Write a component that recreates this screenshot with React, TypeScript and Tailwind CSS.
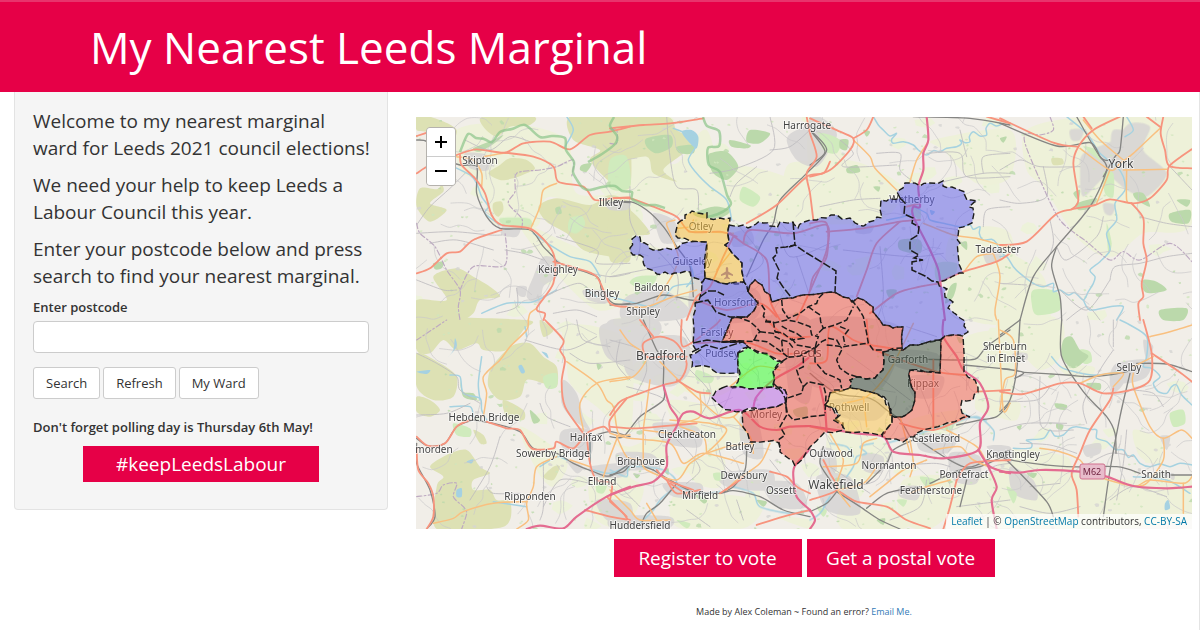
import React from "react";

type Layer =
  | "farm" | "moor" | "wood" | "urban" | "river" | "water" | "border" | "park"
  | "minor" | "rail" | "secondary" | "primary" | "motorway";

type Tile = { x: number; y: number } & Partial<Record<Layer, string[]>>;

/* Map geometry, split in tiles. One tile unit is a third of a map unit. */
const tiles: Tile[] = [
  {
    x: 410, y: 110,
    farm: ["140,60 300,40 470,90 500,250 660,250 660,330 420,260 380,350 250,340 210,220 150,180", "330,340 520,420 660,450 660,560 560,600 430,480"],
    moor: [
      "20,20 60,20 140,60 100,130 60,70 20,60", "220,20 370,20 360,45 300,50 260,80 220,50",
      "235,190 270,165 300,145 350,150 375,175 350,190 310,205 270,210",
      "30,235 80,238 95,225 100,245 60,280 110,300 60,335 20,290",
      "385,290 440,265 540,285 600,255 660,290 660,450 600,440 520,420 470,370 410,335",
      "480,20 640,20 660,60 660,230 600,215 540,150 570,120 490,90",
      "70,500 140,475 190,500 240,530 270,560 210,570 190,610 150,630 20,630 20,570 110,570",
      "250,280 275,275 280,300 265,320 250,305", "300,330 370,340 350,355 290,350",
    ],
    park: ["270,325 355,325 360,345 290,350", "480,325 515,318 525,345 500,370 475,360"],
    wood: ["70,460 100,455 95,475 75,478", "190,115 250,90 280,75 260,95 210,125", "436,295 450,290 455,310 440,312", "515,165 545,160 530,185 510,180"],
    urban: ["165,130 230,135 235,180 180,175", "280,345 330,350 320,380 275,375", "400,440 450,455 440,500 400,530 390,580 350,560 370,500", "520,540 600,545 590,580 535,570", "590,280 660,275 650,300 600,300", "320,530 350,530 345,560 325,555"],
    border: ["20,340 30,370 75,410 110,480 150,540 145,590 150,630", "150,540 190,470 285,465 285,365", "335,355 335,325 295,280 315,245 320,190 390,180 440,170 490,150 485,200"],
    river: ["130,170 180,195 200,220 215,260 235,290 225,310 270,345", "370,370 420,405 480,440 540,455 570,500", "470,20 490,60 465,110", "215,610 290,580 370,575 440,540", "530,540 560,560"],
    minor: ["20,345 60,290 120,235 165,190", "20,370 130,365 240,375 275,375", "60,400 140,390 250,420", "165,90 240,120 300,80 360,95", "20,510 100,540 140,540", "285,420 340,430 400,450", "400,560 470,530 510,520 540,540", "370,400 390,430 440,500", "440,380 560,420 560,460 660,460", "320,535 320,590 260,610", "430,610 500,600 560,620", "500,480 600,500 660,490"],
    rail: ["20,90 50,95 80,140 150,165 200,170 200,250 230,320 270,355 360,360 400,410 430,440 450,460 560,500 575,540 610,580 660,580", "610,275 660,278"],
    secondary: ["140,140 190,150 215,190 215,230", "220,140 280,130 300,130", "440,220 400,240 390,290 360,360", "380,595 360,610 355,630"],
    primary: ["20,78 60,65", "20,190 60,165 140,135 200,118 285,128 340,100 420,95 480,118 540,75 600,65 660,50", "285,128 370,140 430,170 445,215 520,230 555,270 610,265 660,262", "150,135 155,165 195,205 225,250 245,315 275,345 365,358 430,430 430,520 380,595 405,610 400,630", "20,490 60,475 110,430 150,425 190,390 275,360", "430,455 500,475 560,500 600,580 650,590"],
  },
  {
    x: 610, y: 110,
    farm: ["0,140 110,140 200,160 290,60 360,270 500,240 540,160 660,170 660,310 500,340 350,320 150,310 0,230", "100,400 250,480 260,600 100,500 0,500 0,450", "370,170 560,220 480,330 360,320"],
    moor: ["0,20 170,20 200,60 250,90 220,130 160,180 200,215 130,190 110,140 0,150", "0,290 60,300 120,370 60,380 60,440 0,450"],
    park: ["0,150 50,140 60,230 0,235", "80,500 140,500 110,540 60,520", "400,230 450,260 430,290 390,270"],
    wood: ["110,85 180,75 185,110 140,130 110,110", "200,110 250,105 250,130 210,130", "300,130 350,125 385,170 350,210 310,190 295,150", "420,60 480,70 450,100 410,95", "360,90 420,105 410,115 365,110", "250,310 310,290 360,300 340,320 280,325"],
    urban: ["560,60 640,40 660,110 620,170 560,150 530,90", "130,310 190,330 210,390 160,400 140,360", "50,560 160,540 240,600 200,630 40,630", "370,370 420,360 430,400 370,410", "260,500 440,540 430,630 250,630"],
    border: ["0,60 20,60 20,100 0,100"],
    river: ["190,55 250,80 260,105 235,150 260,190 300,230 350,270 365,330", "0,560 60,575 120,590 160,570 190,530 250,520", "240,460 250,500 230,530"],
    water: ["215,65 245,60 265,80 260,115 240,100"],
    minor: ["170,20 180,140 200,230 260,240 265,300", "300,190 380,175 490,120 480,20", "480,120 540,110 600,60", "360,260 380,220 440,170", "60,230 60,330 90,400 80,450", "0,500 100,480 200,460 300,450", "120,400 200,490 200,570", "380,340 460,450 400,500", "500,330 540,440 660,400", "560,440 600,560"],
    rail: ["0,278 60,275 110,300 160,350 200,410 240,470 250,560", "600,60 650,120 590,190 510,270 490,340 460,390 410,500", "0,585 80,580 160,555 240,570 300,575"],
    secondary: ["195,330 170,340 180,370 205,440 190,490 140,570", "200,355 240,350 250,330", "235,365 300,365 370,370", "30,590 110,590 190,560 260,540", "320,480 360,430"],
    primary: ["0,55 100,45 180,40 280,25", "0,265 60,265 130,290 200,320 240,365 330,365 380,380", "590,20 600,70 620,140 590,190 600,250 610,330", "660,155 640,190 590,200 500,285 410,340", "370,380 340,440 300,530 260,560 230,630", "360,370 400,400 470,450 480,570 510,630", "400,400 420,360 550,370 650,345 650,420 610,520 560,630", "260,570 350,600 450,580 500,620"],
  },
  {
    x: 810, y: 110,
    farm: ["0,170 110,150 200,180 280,240 210,330 0,330", "370,90 600,60 600,200 500,220 400,120", "420,380 600,370 600,630 430,600", "0,20 60,60 100,160 0,170"],
    wood: ["90,90 115,90 110,120 90,115", "160,60 180,65 170,80", "570,85 590,80 580,98", "110,175 140,165 150,185 115,190", "270,390 330,390 330,430 270,420", "230,540 260,540 250,565 235,560", "420,530 440,520 430,560 405,580", "450,400 470,395 470,420", "190,230 210,230 205,245"],
    park: ["30,70 90,90 80,130 40,120", "380,460 440,460 430,500 380,510", "300,300 330,290 330,330"],
    urban: ["0,20 60,40 80,80 30,140 0,160", "270,265 310,260 330,300 280,320", "520,415 570,415 570,450 530,460", "140,350 190,345 180,370 140,370"],
    river: ["190,20 205,45 220,60 240,78 260,70 245,88 250,100 280,95 310,105 325,120 350,135 370,122 390,125 410,115 440,110 455,100 450,90 465,98 480,95 478,80 490,65 510,78 530,75 528,55 540,40 560,48 580,40", "310,290 350,310 360,330 400,340 450,350 480,345 490,358 510,350 508,370 520,390 545,388 560,400 570,425 590,440", "230,330 280,320 310,310"],
    water: ["360,300 375,305 365,315"],
    minor: ["90,90 130,130 100,170 260,165", "200,130 270,130 270,180 310,215", "350,130 450,130 470,200 600,200", "400,215 520,190 600,190", "30,290 130,270 210,265", "450,60 470,140", "520,190 520,140 600,130", "210,410 220,560 200,630", "100,420 300,440 400,430", "380,350 450,360", "520,350 530,300 600,290"],
    rail: ["310,20 480,25 600,45", "0,60 45,125 0,165"],
    secondary: ["130,90 180,140 195,175 260,240", "355,95 320,150 300,215", "340,340 430,375 500,385 590,410 600,405", "460,488 500,440 550,430", "550,430 570,500 555,600 560,630"],
    primary: ["0,25 90,65 130,85 120,120 60,180 0,200", "190,20 170,60 130,85", "50,365 160,355 270,335 330,330", "270,335 200,400 170,480 140,560", "380,520 460,485 560,455 600,430", "530,20 600,40", "0,340 50,340 50,440 10,500 0,540", "290,290 330,280", "180,610 260,550 330,530 390,520"],
    motorway: ["350,20 355,90 340,130 340,180 325,230 330,290 310,290 310,320 360,420 385,480 395,550 405,630"],
  },
  {
    x: 1000, y: 110,
    farm: ["80,60 260,20 576,20 576,340 430,370 340,440 250,400 200,340 130,230 80,180", "0,430 130,500 130,630 0,630", "170,240 320,280 330,440 230,380"],
    wood: ["230,280 290,265 270,295 235,300", "430,510 470,515 500,540 450,550 430,540", "510,310 570,300 565,340 515,335", "400,250 430,250 450,290 410,270", "220,250 240,240 235,270", "530,270 570,270 560,290", "480,600 560,595 550,630 490,630"],
    park: ["100,540 170,545 180,600 110,615 95,580", "310,190 340,190 340,260 315,250", "320,340 335,400 325,430", "250,110 290,120 300,150"],
    moor: ["155,145 185,145 190,162 160,165", "480,605 540,595 540,630 490,625"],
    urban: ["250,130 340,90 390,40 450,50 430,120 500,190 440,260 380,240 320,200 250,260 240,180", "210,60 250,60 240,90 215,90", "310,280 345,285 335,315 315,310", "340,60 420,80 400,140 340,130"],
    border: ["150,20 160,60 120,75 80,70 75,100 120,210 180,330 260,395 330,450 370,425 420,450 510,400 576,455"],
    river: ["200,20 260,70 300,130 350,170 370,200 375,240 345,280 350,330 320,370 330,420 300,455 270,480 285,500 280,520 265,545 250,570 225,548 205,555 180,540 160,545 160,520 130,530 100,520 60,490 40,470 20,440 0,440", "380,20 400,60 375,80", "250,570 270,600 330,590 370,590 350,630"],
    minor: ["0,180 60,150 120,170 240,170", "130,170 140,260 60,280 0,270", "420,320 500,340 576,350", "330,510 345,470 420,460 500,440 576,430", "0,520 80,525", "170,410 200,450 290,380 310,320", "180,540 260,600 330,510", "510,170 576,240", "150,330 160,400 130,480", "200,630 260,590 300,630"],
    rail: ["0,40 170,108 270,98 300,140 320,180 270,290 170,410 100,500 60,630", "230,20 300,140 330,150", "370,20 360,120 345,140 310,200", "170,410 155,470 180,560 185,630"],
    secondary: ["250,30 300,90 370,150", "240,115 330,180 360,160 400,130 480,55", "330,180 290,280", "370,180 500,178", "380,180 380,270 395,280"],
    primary: ["0,25 160,98 235,110", "360,20 280,60 235,110 220,160 235,270 215,298", "0,405 80,395 165,315 215,298 285,285 330,268 400,280 450,265 500,210 508,168 575,118", "250,20 275,55", "490,20 482,70 495,120 508,168 575,175", "440,20 482,52", "395,280 430,325 430,400 440,450 425,520 430,560 415,580 420,630"],
  },
  {
    x: 410, y: 320,
    farm: ["460,20 560,20 660,80 660,330 560,260 480,190 470,100", "330,320 470,420 430,500 380,450", "540,480 660,470 660,620 560,600"],
    moor: ["20,0 350,0 340,30 290,90 220,90 200,70 140,90 100,60 60,100 20,90", "20,100 90,130 140,170 130,230 70,240 20,200", "270,110 310,75 360,70 400,110 440,140 440,200 400,190 350,180 330,230 270,240 235,200 240,150", "20,230 60,240 90,270 60,290 20,275", "60,440 110,405 170,390 210,440 240,460 190,480 190,510 240,510 260,540 300,545 300,600 260,625 80,627 80,500 100,470", "190,330 220,345 230,370 210,370", "390,0 430,30 400,50", "400,470 430,440 450,440 430,480", "280,240 340,270 340,300 290,290"],
    park: ["400,170 440,160 440,200 410,205", "130,310 180,325 180,350 140,345", "560,490 590,495 580,520 560,515"],
    wood: ["150,180 160,230 200,240 190,220 160,215", "360,270 390,300 370,310", "560,130 575,135 565,150"],
    urban: ["460,330 540,330 545,400 490,410 450,370", "460,180 500,220 520,290 540,330 490,300 455,250", "570,20 660,10 660,130 590,110", "540,440 660,430 640,470 560,470", "470,420 520,440 500,460", "560,540 660,550 660,620 590,600", "480,210 510,250 500,270"],
    border: ["20,60 110,0", "20,530 80,520 100,495 140,490 130,530 160,560 170,580 155,627"],
    river: ["120,165 150,170 160,220 210,235 215,270 230,300", "215,110 205,190 210,240", "250,545 350,560", "390,440 440,410 470,420", "540,370 540,430", "550,450 600,460 650,440", "120,260 180,260 190,290", "345,20 350,50"],
    water: ["325,140 335,135 345,155 335,160", "395,95 410,100 415,115", "140,510 155,505 155,530 140,530", "135,55 140,80 115,110 130,90", "20,155 60,150 50,162", "170,425 190,418 185,430"],
    minor: ["20,100 80,130 140,170 150,210 210,250", "270,350 240,440 180,540", "20,285 110,280 180,250", "345,60 470,90 560,50", "390,250 410,290 480,320", "400,560 450,480 540,490", "480,100 540,130 660,120", "500,0 520,60 600,80", "330,520 250,520 230,500", "400,430 400,560 390,600"],
    rail: ["20,355 55,378 105,370 140,320 190,300", "20,370 20,430 60,510 75,590 50,627", "190,300 250,310 330,335 370,385 440,400 490,430 550,455 600,468 660,430", "540,350 540,430", "560,345 600,335 660,350"],
    secondary: ["355,0 350,30 300,80 270,120 220,170 230,220 220,290", "440,410 380,440 370,500 350,550 355,600 320,627", "70,610 130,595 160,575 250,550 350,545", "470,125 560,190 590,240 610,260 625,340 660,345", "660,170 560,190 510,250 520,330", "480,420 540,440", "625,345 600,410 580,470"],
    primary: ["405,0 460,60 450,90 465,120 455,185 465,260 520,340", "230,305 290,325 330,330 365,385 430,385 440,365 490,385 530,340 580,320 600,335 600,300 650,235", "20,350 55,378 105,370 140,320 180,300", "20,385 25,450 55,490 70,530 70,590 50,627", "530,345 540,430 560,480 605,490 600,540", "525,570 600,590 660,600", "590,530 650,590"],
    motorway: ["350,627 390,617 460,625 500,590 590,530 660,500"],
  },
  {
    x: 610, y: 320,
    farm: ["210,140 340,150 370,200 310,230 220,210", "0,360 60,380 150,350 170,430 60,400", "180,240 380,280 410,370 330,380 200,310", "230,420 340,410 330,500 260,490", "0,470 100,500 60,600 0,590", "200,520 400,530 460,560 400,625 200,620", "500,590 600,600 600,627"],
    wood: ["160,450 175,445 175,465", "250,520 290,540 280,550", "70,460 90,465 80,475", "440,540 470,545 460,560", "320,230 350,240", "550,270 590,260 590,290 560,290"],
    park: ["310,460 340,460 335,480 315,480", "260,150 310,170 300,190 260,180", "200,600 240,610 230,625"],
    urban: ["50,60 220,50 240,150 180,200 60,170 40,110", "0,0 140,0 140,50 0,60", "390,290 440,290 460,410 400,400", "330,460 480,450 480,510 350,500", "130,310 260,320 270,380 170,370", "20,400 120,400 150,440 40,450", "160,490 270,490 270,530 190,530", "460,490 560,490 590,560 500,560", "10,590 180,590 170,627 10,627", "430,0 600,0 600,240 540,220 520,120 450,90", "260,0 360,0 340,60 250,60"],
    river: ["0,450 50,470 60,440 160,450 200,490 150,540 130,570 90,610", "370,500 430,520 450,560 540,580 600,570", "200,500 280,520 330,515"],
    minor: ["0,60 90,90 110,150 80,220", "200,0 250,80 300,130", "240,150 300,220 270,290", "180,340 240,400 270,450 230,490", "320,360 340,430 370,460", "280,170 380,170", "480,420 520,470 550,500", "50,200 150,230 210,280", "20,490 90,560", "230,570 300,620", "380,540 400,600", "30,60 20,130 60,180"],
    rail: ["100,0 140,90 160,120 160,190 160,240 90,290 40,350 0,350", "130,450 180,480 250,515 330,520 370,512 450,530 520,570 600,590", "410,390 405,450 370,500 330,520", "0,465 40,455 70,430 130,450", "200,490 150,550 110,580 95,610"],
    secondary: ["0,185 70,170 110,110 60,70 30,30", "120,180 110,260 100,330 100,430", "150,125 210,185 270,240 330,290 370,290 390,270", "0,340 60,355 180,370 220,430 280,400 400,430", "270,220 270,290 210,310", "180,300 300,310 350,330 300,390 240,430 200,480 110,450 90,420 50,410 20,350", "430,370 350,380 290,400", "480,370 450,430 380,480 350,510", "100,330 180,340", "210,320 280,350 290,400", "360,200 440,140 510,150", "0,510 60,570 90,600 180,600", "370,290 420,350 430,400", "140,600 110,550"],
    primary: ["0,285 30,245 90,220 160,195 210,180 230,130 200,70 150,50 100,70 110,110 160,110 230,110", "0,320 80,325 200,315 260,310", "200,180 260,215 300,220", "90,0 130,50", "215,0 220,80 310,20 330,0", "170,480 200,520 270,510", "140,450 170,480 250,510", "330,520 390,480 400,470", "480,455 530,470 560,500 600,520", "260,70 400,65 500,100 560,100", "600,50 530,50 470,0", "0,545 40,580 60,610", "180,490 240,530", "440,615 520,590 600,570"],
    motorway: ["0,525 70,500 130,485 170,440 170,375 205,305 180,260 160,195", "205,305 220,280 250,275 300,295 390,270 450,320 500,330 540,320 600,318", "600,388 555,437 550,470 560,530 600,570", "430,265 440,230 490,180 560,140 600,110"],
  },
  {
    x: 810, y: 320,
    farm: ["470,50 600,50 600,280 500,270 500,200 470,150", "60,340 200,350 240,400 200,460 120,500 60,440", "280,480 420,470 450,540 360,627 270,600", "440,500 600,460 600,627 430,627", "100,560 280,590 280,627 100,627", "300,300 460,270 440,330 340,350"],
    wood: ["200,600 225,595 220,615", "440,50 460,60 450,70", "290,370 300,380", "590,260 600,270", "210,350 230,360"],
    park: ["260,540 290,540 280,560", "20,560 50,570 40,590", "360,320 430,310 420,330", "330,470 380,480 350,500"],
    urban: ["240,90 380,100 370,160 260,140", "330,340 440,350 410,400 330,390", "20,470 120,470 150,580 50,570", "160,400 220,410 210,460 160,450", "420,400 510,410 500,490 430,480", "0,0 270,20 220,200 110,200 0,190", "300,170 400,170 380,230 310,230", "530,380 600,380 600,430", "270,500 330,500 320,540 270,530", "60,240 230,240 200,300 90,290", "30,390 70,390 80,450 40,470"],
    river: ["190,370 150,380 170,400 140,410 130,440 110,470", "230,370 300,350 360,330 430,310 500,290 550,330 550,360", "0,600 30,580 60,530 40,560", "460,280 480,290 530,300", "60,370 110,380 130,410"],
    minor: ["240,400 200,480 120,500", "420,340 400,400 460,440", "110,100 220,180 300,240", "60,440 120,480 180,520", "230,440 370,430 420,440", "350,480 330,560 240,600", "470,110 470,210", "440,560 600,540", "0,150 70,200 40,240", "500,480 550,440 600,430", "290,20 380,50", "330,200 370,300"],
    rail: ["350,118 460,120 500,115 530,80 600,30", "460,135 600,148", "0,160 80,220 180,235 230,270 270,300 300,350", "80,515 150,560 210,600 270,627", "170,565 230,520 330,500", "310,360 250,390 230,430 170,490", "80,515 60,480 30,430 40,380", "0,575 50,550 80,515", "310,350 460,440 550,410 600,390", "440,315 510,300 560,290 600,250", "470,480 450,560", "360,490 450,450 510,440 600,400"],
    secondary: ["60,340 100,420 80,500 120,560", "200,440 160,490 80,510", "350,420 280,450 230,490 180,530", "420,480 350,500 300,520", "300,360 310,430 300,470", "410,330 500,380 530,430", "160,230 170,320", "310,10 240,150 170,230 100,250", "370,390 450,380 490,420 590,460", "40,440 140,430 160,370 200,355", "600,250 580,270 570,100 565,0", "270,290 300,400"],
    primary: ["0,130 50,120 60,20 130,60 180,75 280,90", "0,320 50,330", "90,515 140,545 230,560 290,600 360,625", "170,0 180,75 220,100 380,155 470,165", "600,210 500,215", "370,120 370,330", "440,480 420,560 400,627", "40,420 60,460 80,510 0,540", "600,420 480,430 440,480", "270,310 370,330 470,290"],
    motorway: ["400,0 400,50 440,110 460,150 510,190 535,260 510,310 505,390 400,415 330,405 250,395 220,350 140,340 0,318", "505,390 540,440 600,460", "530,430 560,500 545,540 560,627", "0,570 15,600 0,627", "50,335 45,270 30,200"],
  },
  {
    x: 1000, y: 320,
    farm: ["0,0 180,0 180,110 120,150 60,100 0,90", "0,410 80,390 200,410 230,450 390,480 576,470 576,600 0,627", "180,140 280,140 270,170 210,170", "0,240 60,250 50,300 0,290", "400,330 480,360 480,430 420,410"],
    wood: ["190,60 215,50 240,90 265,110 220,145 185,110", "165,250 200,255 195,270 170,265", "170,310 190,315 185,330 170,325", "260,190 300,190 300,210 270,205", "80,460 110,460 100,475", "50,320 65,315 60,330"],
    park: ["240,90 270,95 275,125 250,130", "20,500 50,520 40,550", "510,280 550,270 555,310 520,320"],
    urban: ["350,130 450,120 440,170 380,190 330,180", "250,380 300,370 300,400 260,410", "40,100 80,100 80,120 40,120", "30,440 100,480 110,540 40,520", "480,460 520,460 520,480", "430,60 460,80 440,120", "330,180 370,190 340,220", "480,350 510,350 500,390"],
    river: ["360,0 390,15 440,50 440,110 430,140 455,145 480,170 460,190 475,215 500,220 515,200 530,195 545,225 576,255", "155,110 190,145 280,165 360,155", "40,385 90,385 95,370 80,360 130,355 150,330 165,348 190,345 210,325 230,320 270,328 290,330 290,355 320,365 345,388 370,390 385,412 400,405 420,430 450,440 480,432 510,440 540,430 576,435", "400,470 500,480 570,520"],
    water: ["495,550 505,540 510,565 495,570"],
    minor: ["60,370 150,375 230,400", "120,170 125,320 220,330", "260,310 250,250 300,150 340,90", "0,330 80,310 200,310", "0,245 110,240 150,200", "340,80 340,0", "60,560 150,580 240,560", "330,540 400,500 500,530", "380,330 370,430 350,540", "400,210 460,220 490,260", "250,440 330,400 400,410", "90,500 180,490"],
    rail: ["185,0 185,110 250,215 320,290 345,340 348,400", "60,0 50,150 30,240 0,275", "70,157 200,165 260,170 340,163 400,150", "410,130 500,132 576,155", "60,0 0,45", "0,145 70,157 45,175", "390,160 360,290 330,450 310,590", "0,410 60,425 200,440 350,440 420,460", "0,400 60,460 140,545 160,590", "510,465 576,465"],
    secondary: ["0,270 15,180 45,160 40,60 0,30", "240,190 300,165 370,160 340,200", "400,160 400,200 450,320 490,355 545,330 576,355", "450,50 510,35 576,15", "490,355 490,420 440,490 410,498", "120,385 180,395 240,420 270,460 360,490 410,498 450,480 550,490 576,470", "550,490 550,580", "400,140 440,120 460,110"],
    primary: ["0,215 70,222 180,190 240,190 310,220 400,208 450,180 455,100 430,0", "455,100 530,150 576,185", "340,205 330,240 270,330 240,400 215,460 230,510 235,590"],
    motorway: ["0,455 60,458 120,450 240,455 320,470 400,498 500,505 576,500"],
  },
];

const style: Record<Layer, { stroke?: string; width?: number; fill?: string; dash?: string; opacity?: number }> = {
  farm: { fill: "#eef1d9" },
  moor: { fill: "#dde1b4" },
  park: { fill: "#d0ebbd" },
  wood: { fill: "#bbd9ab" },
  urban: { fill: "#d5d3d2", opacity: 0.8 },
  water: { fill: "#a5d1e2" },
  border: { stroke: "#bda9c1", width: 3.5, dash: "16 7 5 7" },
  river: { stroke: "#a6d2e0", width: 4.5 },
  minor: { stroke: "#bdbbbe", width: 2.5 },
  rail: { stroke: "#858583", width: 4 },
  secondary: { stroke: "#f9c080", width: 4.5 },
  primary: { stroke: "#f7947e", width: 5.5 },
  motorway: { stroke: "#e46c91", width: 6.5 },
};

const order: Layer[] = ["farm", "moor", "urban", "park", "wood", "water", "river", "border", "minor", "rail", "secondary", "primary", "motorway"];

function curve(points: string, closed: boolean) {
  const p = points.split(" ").map((s) => s.split(",").map(Number));
  const n = p.length;
  const at = (i: number) => (closed ? p[(i + n) % n] : p[Math.max(0, Math.min(n - 1, i))]);
  let d = `M${p[0][0]} ${p[0][1]}`;
  for (let i = 0; i < (closed ? n : n - 1); i++) {
    const [a, b, c, e] = [at(i - 1), at(i), at(i + 1), at(i + 2)];
    d += `C${b[0] + (c[0] - a[0]) / 7} ${b[1] + (c[1] - a[1]) / 7} ${c[0] - (e[0] - b[0]) / 7} ${c[1] - (e[1] - b[1]) / 7} ${c[0]} ${c[1]}`;
  }
  return closed ? d + "Z" : d;
}

/* Bends each long side by an amount that depends only on its midpoint, so that shared sides still meet. */
function roughen(points: string) {
  const p = points.split(" ").map((s) => s.split(",").map(Number));
  const out: string[] = [];
  p.forEach((a, i) => {
    const b = p[(i + 1) % p.length];
    const mx = (a[0] + b[0]) / 2;
    const my = (a[1] + b[1]) / 2;
    out.push(`${a[0]},${a[1]}`);
    if (Math.hypot(a[0] - b[0], a[1] - b[1]) > 7) {
      out.push(`${(mx + Math.sin(mx * 7 + my * 3) * 1.6).toFixed(1)},${(my + Math.cos(mx * 5 + my * 9) * 1.6).toFixed(1)}`);
    }
  });
  return out.join(" ");
}

/* Small woods, fields and lanes spread evenly over the countryside. */
let seed = 11;
const random = () => {
  seed = (seed * 16807) % 2147483647;
  return seed / 2147483647;
};
const patch = (size: number) => {
  const x = 416 + random() * 776;
  const y = 117 + random() * 412;
  const pts: string[] = [];
  for (let k = 0; k < 7; k++) {
    const r = size * (0.4 + random() * 0.6);
    pts.push(`${(x + r * Math.cos(k * 0.9)).toFixed(1)},${(y + r * 0.7 * Math.sin(k * 0.9)).toFixed(1)}`);
  }
  return pts.join(" ");
};
const fields = Array.from({ length: 120 }, () => patch(13));
const copses = Array.from({ length: 560 }, (_, i) => ({ points: patch(i % 9 === 0 ? 4 : 2), fill: i % 3 ? "#cfe6bd" : "#bcd9ab" }));
const hamlets = Array.from({ length: 130 }, () => patch(3));
const lanes = Array.from({ length: 260 }, () => {
  let x = 416 + random() * 776;
  let y = 117 + random() * 412;
  let angle = random() * 6.3;
  const pts = [`${x},${y}`];
  for (let k = 0; k < 5; k++) {
    angle += (random() - 0.5) * 1.3;
    x += Math.cos(angle) * 9;
    y += Math.sin(angle) * 9;
    pts.push(`${x.toFixed(1)},${y.toFixed(1)}`);
  }
  return curve(pts.join(" "), false);
});

const parkEdge = [
  "460,152 468,134 476,138 484,139 492,142 500,132 512,129 525,125 540,137 552,136 565,138 566,150 574,162 573,172 577,180 583,188 590,190 602,187 615,186 622,191 632,192 632,199 645,205 655,205 665,208",
  "588,162 602,154 615,144 617,136 610,126 614,117",
  "703,117 707,126 719,131 719,146 708,148 709,165 720,172 727,195 731,203 727,209 718,214 708,217",
];

const wards: { name: string; fill: string; points: string }[] = [
  { name: "Guiseley and Rawdon", fill: "#6060ec", points: "630,248 632,239 636,236 640,237 641,243 648,245 653,250 660,250 666,248 678,248 688,242 707,242 706,262 705,278 702,283 695,278 690,272 680,273 672,274 665,272 657,274 652,270 644,265 643,257 640,255 633,255" },
  { name: "Otley and Yeadon", fill: "#f5bd3c", points: "678,223 685,220 685,215 690,213 692,211 698,213 707,213 707,218 720,218 724,219 730,218 729,225 729,242 725,245 732,253 742,263 744,282 735,284 727,284 716,281 705,278 707,242 690,241 678,238 675,235" },
  { name: "Horsforth", fill: "#6060ec", points: "705,278 716,281 727,284 744,282 747,286 748,292 758,303 747,317 732,318 722,342 743,342 748,347 738,353 738,373 717,373 710,367 692,367 690,355 700,350 693,345 693,317 695,303 700,297 702,283" },
  { name: "Harewood and Wetherby", fill: "#6060ec", points: "729,225 743,225 748,228 756,224 763,223 770,226 777,228 780,222 793,222 798,228 804,222 810,220 817,220 826,218 831,215 837,215 842,219 850,218 855,223 863,226 869,222 877,217 882,218 881,200 889,199 900,198 897,192 903,188 905,183 910,183 920,186 930,183 943,181 943,186 952,187 965,192 967,200 977,201 969,207 973,208 972,223 958,228 958,236 960,243 958,253 963,273 953,276 938,282 943,287 947,289 945,297 953,302 948,308 954,313 960,318 965,321 964,326 968,332 963,335 945,336 940,340 925,343 910,345 903,350 902,348 903,327 893,328 883,325 873,312 870,305 858,298 852,302 843,297 830,292 803,295 793,298 772,302 770,295 762,285 755,280 748,292 747,286 744,282 742,263 732,253 725,245 729,242" },
  { name: "Central Leeds", fill: "#ee5548", points: "748,292 755,280 762,285 770,295 772,302 793,298 803,295 830,292 843,297 852,302 858,298 870,305 873,312 883,325 893,328 903,327 902,348 883,352 883,370 875,378 860,377 850,380 850,388 830,393 825,405 833,409 838,415 833,420 843,423 843,430 825,432 810,447 807,451 795,466 788,458 780,452 779,443 770,441 750,442 743,427 742,412 767,408 786,402 785,390 773,387 773,372 782,362 762,353 748,347 743,342 722,342 732,318 747,317 758,303" },
  { name: "Pudsey South", fill: "#30ff2c", points: "738,353 743,351 748,347 753,350 758,353 762,353 771,357 782,362 775,368 773,372 775,378 773,387 750,389 733,388 740,373" },
  { name: "Farnley", fill: "#b663ea", points: "722,388 732,387 750,389 773,387 780,388 785,390 786,402 767,408 755,408 743,411 730,410 722,407 711,397 716,391" },
  { name: "Garforth and Swillington", fill: "#3c4f3e", points: "883,352 903,350 910,345 925,343 941,340 940,373 925,372 910,370 910,380 915,392 912,410 902,417 890,415 888,402 877,394 865,391 850,388 850,380 860,377 875,378 883,370" },
  { name: "Rothwell", fill: "#fcc451", points: "825,405 830,393 838,390 850,388 865,391 877,394 885,400 889,407 892,423 886,430 880,435 860,432 845,432 842,425 833,420 840,415 835,408" },
  { name: "Kippax and Methley", fill: "#f26150", points: "941,340 945,336 963,336 964,372 975,380 978,392 973,400 962,400 962,413 970,417 960,419 947,423 932,428 917,433 910,437 903,442 893,439 882,436 886,430 892,423 889,407 890,415 902,417 912,410 915,392 910,380 910,370 940,373" },
];

const outerEdges = [
  "793,222 794,234 795,245 786,247 776,248 777,254 773,258 779,270 777,278 783,287 791,297",
  "789,247 795,245 805,252 815,258 836,271 835,292",
  "900,198 905,203 904,214 913,218 912,223 919,227 918,235 910,240 910,250 919,255 914,258 923,260 912,262 912,270 925,276 932,281 938,282",
  "695,303 708,300 716,312 730,317 748,317", "693,343 707,340 722,342 742,341",
  "700,297 708,291 716,291 724,295", "692,352 706,345 720,349 742,342",
];

/* City ward boundaries, in thirds of a map unit from (700, 270). */
const cityEdges = [
  "65,215 110,212 160,215 170,195 180,185 165,168 150,155 105,138",
  "160,210 200,215 225,232 250,250 265,262 245,275", "180,185 220,190 225,200 245,210 248,245",
  "185,105 195,120 190,138 200,153 220,155 225,185 245,190", "245,90 248,120 265,145 300,130 325,110 350,100 355,85 370,70",
  "195,155 225,158 260,150 290,155 330,170 335,195 355,200 350,215 345,235", "225,185 250,190 275,210 310,205 290,190 265,180 240,165",
  "325,110 345,125 360,135 362,155 370,175 405,165 440,150 450,130 460,110", "455,90 475,115 490,140 500,190 505,220 520,240 550,240",
  "370,175 350,195", "380,225 430,230 500,220", "345,235 365,215 385,205 410,210 425,235", "420,170 445,180 430,200 435,225",
  "345,235 345,275 375,310 400,320 420,330 425,355", "425,240 410,270 420,295 445,312 470,320",
  "265,262 300,258 340,235", "310,262 310,290 290,300 298,325 310,350 305,370 260,385",
  "310,350 325,335 370,345 378,375 375,430", "255,385 262,430 280,450 330,440 375,435",
  "220,340 245,365 258,390 258,410", "258,410 260,435 240,470 255,495 235,510 240,535",
  "275,205 290,225 320,230 345,235", "245,210 265,215 280,235",
];

const labels: [string, number, number, number?][] = [
  ["Harrogate", 807, 129], ["Skipton", 480, 164], ["Ilkley", 611, 206], ["Otley", 701, 230], ["Guiseley", 692, 265],
  ["Baildon", 652, 291], ["Keighley", 558, 273], ["Bingley", 602, 297], ["Shipley", 643, 315], ["Horsforth", 737, 306],
  ["Farsley", 717, 336], ["Pudsey", 722, 357], ["Bradford", 661, 360, 12], ["Leeds", 804, 357, 13], ["Wetherby", 912, 203],
  ["Tadcaster", 998, 253], ["York", 1121, 168, 12], ["Garforth", 908, 363], ["Kippax", 923, 387], ["Rothwell", 849, 411],
  ["Morley", 766, 418], ["Cleckheaton", 687, 438], ["Batley", 740, 450], ["Outwood", 831, 457], ["Wakefield", 836, 489, 12],
  ["Normanton", 889, 469], ["Castleford", 936, 442], ["Pontefract", 964, 478], ["Featherstone", 931, 494],
  ["Knottingley", 1013, 458], ["Sherburn", 1005, 350], ["in Elmet", 1006, 362], ["Selby", 1129, 371], ["Snaith", 1156, 478],
  ["Hebden Bridge", 484, 421], ["Halifax", 586, 441], ["Sowerby Bridge", 553, 457], ["Brighouse", 641, 465],
  ["Elland", 602, 485], ["Ripponden", 530, 500], ["morden", 434, 453], ["Mirfield", 700, 499], ["Dewsbury", 744, 479],
  ["Ossett", 781, 494], ["Huddersfield", 640, 529],
];

function WardMap() {
  return (
    <svg viewBox="416 117 776 412" preserveAspectRatio="xMidYMid slice" className="block h-full w-full" role="img" aria-label="Leeds council wards">
      <rect x="0" y="0" width="1700" height="700" fill="#f1eee8" />
      {fields.map((d, i) => (
        <polygon key={i} points={d} fill="#edf2da" />
      ))}
      {order.map((layer) => (
        <g key={layer} opacity={style[layer].opacity} strokeLinecap="round" strokeLinejoin="round">
          {tiles.map((t) => (
            <g key={`${t.x}-${t.y}`} transform={`translate(${t.x} ${t.y}) scale(.33333)`}>
              {(t[layer] ?? []).map((pts) => (
                <path
                  key={pts}
                  d={curve(pts, !!style[layer].fill)}
                  fill={style[layer].fill ?? "none"}
                  stroke={style[layer].stroke}
                  strokeWidth={style[layer].width}
                  strokeDasharray={style[layer].dash}
                />
              ))}
            </g>
          ))}
          {layer === "wood" && copses.map((c, i) => <polygon key={i} points={c.points} fill={c.fill} opacity="0.8" />)}
          {layer === "urban" && hamlets.map((d, i) => <polygon key={i} points={d} fill="#d6d5d3" />)}
          {layer === "minor" && lanes.map((d, i) => <path key={i} d={d} fill="none" stroke="#cac8ca" strokeWidth="0.7" />)}
        </g>
      ))}
      {parkEdge.map((d) => (
        <path key={d} d={curve(d, false)} fill="none" stroke="#8cc48a" strokeWidth="2.5" opacity="0.7" />
      ))}
      <path d="M727 267c1 0 1.200 1 1.200 2v2.500l4.800 3v1.500l-4.800-1.500v2.500l1.600 1.200v1l-2.800-.8-2.800.8v-1l1.600-1.200v-2.500l-4.800 1.500v-1.500l4.800-3v-2.500c0-1 .2-2 1.200-2z" fill="#7d5fb0" />
      <g fontFamily="'Noto Sans', sans-serif" textAnchor="middle" fill="#444444" stroke="#ffffff" strokeOpacity="0.6" strokeWidth="2" strokeLinejoin="round" paintOrder="stroke">
        {labels.map(([text, x, y, size]) => (
          <text key={text} x={x} y={y} fontSize={size ?? 10}>{text}</text>
        ))}
      </g>
      <rect x="1080" y="464" width="25" height="15" rx="2" fill="#e8bccb" stroke="#d2708f" strokeWidth="1" />
      <text x="1092" y="475" fontSize="9" fontFamily="'Noto Sans', sans-serif" textAnchor="middle" fill="#6f2240">M62</text>
      {wards.map((w) => (
        <polygon key={w.name} points={roughen(w.points)} fill={w.fill} fillOpacity="0.52" stroke="#1c1c1c" strokeWidth="1.4" strokeDasharray="6 3" />
      ))}
      <g fill="none" stroke="#1c1c1c" strokeWidth="1.5" strokeDasharray="8 2">
        {outerEdges.map((p) => (
          <polyline key={p} points={p} />
        ))}
      </g>
      <g transform="translate(700 270) scale(.33333)" fill="none" stroke="#1c1c1c" strokeWidth="4.5" strokeDasharray="18 7">
        {cityEdges.map((p) => (
          <polyline key={p} points={p} />
        ))}
      </g>
    </svg>
  );
}

const plainButton = "h-8 rounded-[3px] border border-[#cccccc] bg-white px-3 text-[13px] leading-[18px] text-[#333333]";
const redButton = "flex items-center justify-center bg-[#e60047] text-[19px] text-white";
const zoomButton = "flex h-7 w-7 items-center justify-center bg-white text-black";

export default function App() {
  return (
    <div className="min-h-screen border-r border-[#e4e4e4] bg-white font-['Open_Sans',sans-serif] text-[13px] text-[#333333]">
      <header className="-mr-px flex h-[92px] items-center border-t-2 border-[#e8336c] bg-[#e60047]">
        <h1 className="pl-[90px] text-[44px] leading-[60px] text-white">My Nearest Leeds Marginal</h1>
      </header>

      <div className="flex items-start gap-7 pl-[14px] pr-[7px]">
        <aside className="w-[374px] shrink-0 rounded-b-[4px] border border-t-0 border-[#e3e3e3] bg-[#f5f5f5] px-[18px] pb-[27px] pt-4">
          <div className="-mr-4 flex flex-col gap-[10px] text-[19px] leading-[27px]">
            <p>
              Welcome to my nearest marginal
              <br />
              ward for Leeds 2021 council elections!
            </p>
            <p>We need your help to keep Leeds a Labour Council this year.</p>
            <p>Enter your postcode below and press search to find your nearest marginal.</p>
          </div>
          <form onSubmit={(e) => e.preventDefault()}>
            <label htmlFor="postcode" className="mb-[5px] mt-2 block font-semibold leading-[18px]">Enter postcode</label>
            <input id="postcode" type="text" className="block h-8 w-full rounded-[4px] border border-[#cccccc] bg-white px-3 outline-none" />
            <div className="mt-[14px] flex gap-[3px]">
              <button type="submit" className={plainButton}>Search</button>
              <button type="reset" className={plainButton}>Refresh</button>
              <button type="button" className={plainButton}>My Ward</button>
            </div>
          </form>
          <p className="mb-[10px] mt-[19px] font-semibold leading-[18px]">Don't forget polling day is Thursday 6th May!</p>
          <button type="button" className={`${redButton} mx-auto h-9 w-[236px]`}>#keepLeedsLabour</button>
        </aside>

        <main className="min-w-0 flex-1 pt-[25px]">
          <div className="relative h-[412px] overflow-hidden">
            <WardMap />
            <div className="absolute left-[10px] top-[10px] flex flex-col gap-px overflow-hidden rounded-[4px] border border-[#b5b2ad] bg-[#cccccc]">
              <button type="button" aria-label="Zoom in" className={zoomButton}>
                <svg width="12" height="12" viewBox="0 0 12 12" className="block"><path d="M6 0v12M0 6h12" stroke="currentColor" strokeWidth="2" /></svg>
              </button>
              <button type="button" aria-label="Zoom out" className={zoomButton}>
                <svg width="12" height="12" viewBox="0 0 12 12" className="block"><path d="M0 6h12" stroke="currentColor" strokeWidth="2" /></svg>
              </button>
            </div>
            <p className="absolute bottom-0 right-0 bg-white/70 px-[5px] text-[10px] leading-[15px]">
              <a href="#leaflet" className="text-[#0078a8]">Leaflet</a> | © <a href="#osm" className="text-[#0078a8]">OpenStreetMap</a> contributors, <a href="#licence" className="text-[#0078a8]">CC-BY-SA</a>
            </p>
          </div>
          <div className="mt-[10px] flex justify-center gap-[5px]">
            <a href="#register" className={`${redButton} h-[38px] w-[188px]`}>Register to vote</a>
            <a href="#postal" className={`${redButton} h-[38px] w-[188px]`}>Get a postal vote</a>
          </div>
          <p className="mt-7 text-center text-[9px] leading-[14px]">
            Made by Alex Coleman ~ Found an error? <a href="#email" className="text-[#337ab7]">Email Me.</a>
          </p>
        </main>
      </div>
    </div>
  );
}
